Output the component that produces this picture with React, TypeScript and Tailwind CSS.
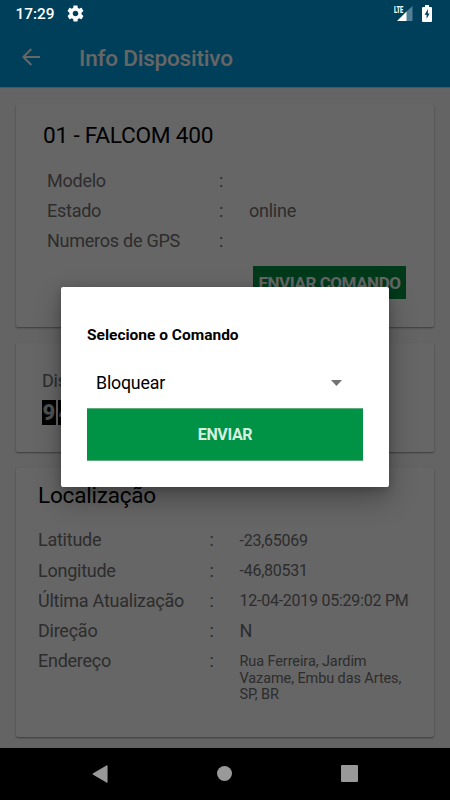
import React from 'react';

const DEVICE_ROWS = [
  { label: 'Modelo', value: '' },
  { label: 'Estado', value: 'online' },
  { label: 'Numeros de GPS', value: '' },
];

const LOCATION_ROWS = [
  { label: 'Latitude', value: '-23,65069', size: 'text-[16px] pt-[2px]' },
  { label: 'Longitude', value: '-46,80531', size: 'text-[16px] pt-[2px]' },
  { label: 'Última Atualização', value: '12-04-2019 05:29:02 PM', size: 'text-[16px] pt-[2px]' },
  { label: 'Direção', value: 'N', size: 'text-[18px]' },
];

const ODOMETER = ['9', '4'];

const CARD = 'bg-white rounded-[2px] shadow-[0_1px_2px_rgba(0,0,0,0.4)]';

const StatusBar: React.FC = () => (
  <div className="absolute inset-x-0 top-0 h-[27px] pl-[15.5px] pr-[18px] flex items-center justify-between text-white">
    <div className="flex items-center gap-[12px]">
      <span className="pt-px text-[15.4px] leading-[27px] font-medium">17:29</span>
      <svg className="w-[17px] h-[17px] -mt-px" viewBox="1.5 1.5 21 21" fill="currentColor">
        <path d="M19.43 12.98c.04-.32.07-.64.07-.98s-.03-.66-.07-.98l2.11-1.65c.19-.15.24-.42.12-.64l-2-3.46c-.12-.22-.39-.3-.61-.22l-2.49 1c-.52-.4-1.08-.73-1.69-.98l-.38-2.65C14.46 2.18 14.25 2 14 2h-4c-.25 0-.46.18-.49.42l-.38 2.65c-.61.25-1.17.59-1.69.98l-2.49-1c-.23-.09-.49 0-.61.22l-2 3.46c-.13.22-.07.49.12.64l2.11 1.65c-.04.32-.07.65-.07.98s.03.66.07.98l-2.11 1.65c-.19.15-.24.42-.12.64l2 3.46c.12.22.39.3.61.22l2.49-1c.52.4 1.08.73 1.69.98l.38 2.65c.03.24.24.42.49.42h4c.25 0 .46-.18.49-.42l.38-2.65c.61-.25 1.17-.59 1.69-.98l2.49 1c.23.09.49 0 .61-.22l2-3.46c.12-.22.07-.49-.12-.64l-2.11-1.65zM12 15.5c-1.93 0-3.5-1.57-3.5-3.5s1.57-3.5 3.5-3.5 3.5 1.57 3.5 3.5-1.57 3.5-3.5 3.5z" />
      </svg>
    </div>
    <div className="flex items-center gap-[9px]">
      <div className="relative w-5 h-[17px]">
        <svg className="w-5 h-[17px]" viewBox="0 0 20 17">
          <path d="M19.5 1v15H13V7z" fill="#4f8095" />
          <path d="M13.5 6.5V16H4z" fill="#fff" />
        </svg>
        <span className="absolute left-px top-0 text-[9.5px] leading-[9px] font-black origin-left scale-x-[0.6]">LTE</span>
      </div>
      <svg className="w-[10px] h-[17px] -mt-px" viewBox="0 0 10 17">
        <path d="M3 0h4v2h2a1 1 0 0 1 1 1v13a1 1 0 0 1-1 1H1a1 1 0 0 1-1-1V3a1 1 0 0 1 1-1h2z" fill="#fff" />
        <path d="M6 4 2.6 9.8h2v4l3-5.3H5.8z" fill="#003f59" />
      </svg>
    </div>
  </div>
);

const NavBar: React.FC = () => (
  <div className="absolute inset-x-0 bottom-0 h-[52px] bg-black text-[#999999]">
    <div className="h-full pl-[92px] pr-[92px] flex items-center justify-between">
      <svg className="w-4 h-[18px]" viewBox="0 0 16 19" fill="currentColor">
        <path d="M14.8.5q1.2-.6 1.2.8v16.4q0 1.4-1.2.8L.8 10.3q-1.2-.8 0-1.6z" />
      </svg>
      <div className="w-[15px] h-[15px] -mt-px rounded-full bg-[#999999]" />
      <div className="w-[17px] h-[17px] -mt-px rounded-[1px] bg-[#999999]" />
    </div>
  </div>
);

const CommandDialog: React.FC = () => (
  <div className="absolute left-[61px] top-[287px] w-[328px] h-[200px] bg-white rounded-[2px] px-[26px] pt-[38px] shadow-[0_12px_28px_rgba(0,0,0,0.3),0_2px_8px_rgba(0,0,0,0.2)]">
    <h2 className="text-[15.5px] leading-5 font-bold text-black">Selecione o Comando</h2>
    <div className="mt-[25px] h-[25px] pl-[9px] pr-[21px] flex items-center justify-between">
      <span className="pt-px text-[17.8px] tracking-[-0.2px] text-black">Bloquear</span>
      <svg className="w-[11px] h-[6px]" viewBox="0 0 11 6" fill="#737373">
        <path d="M0 0h11L5.5 6z" />
      </svg>
    </div>
    <button className="mt-[13px] w-full h-[53px] bg-[#009245] text-[#d6f0e0] text-[16px] tracking-[-0.35px] font-bold pt-px border-y border-[#5eab7c]">ENVIAR</button>
  </div>
);

const App: React.FC = () => {
  return (
    <div className="relative w-[450px] h-[800px] overflow-hidden bg-[#fafafa] font-['Roboto',sans-serif]">
      <header className="h-[87px] pt-[27px] bg-[#009de0] shadow-[0_1px_1px_rgba(0,0,0,0.15)]">
        <div className="h-[61px] pl-[22px] flex items-center text-white">
          <svg className="w-[18px] h-[18px] -mt-[2px]" viewBox="0 0 18 18" fill="none" stroke="currentColor" strokeWidth="2">
            <path d="M18 9H2M9.3 1 1.3 9l8 8" />
          </svg>
          <h1 className="ml-[39px] text-[22.5px] tracking-[-0.2px] leading-7 font-medium">Info Dispositivo</h1>
        </div>
      </header>

      <main className="px-4 pt-[17px] flex flex-col gap-4 text-[#707070]">
        <section className={`${CARD} h-[222.5px] pl-[27px] pr-7 pt-[18px]`}>
          <h2 className="text-[22.7px] tracking-[-0.25px] leading-7 text-black">01 - FALCOM 400</h2>
          <div className="mt-[15px] pl-1">
            {DEVICE_ROWS.map((row) => (
              <div key={row.label} className="h-[30.4px] flex items-center text-[18px] tracking-[-0.25px]">
                <span className="w-[172px]">{row.label}</span>
                <span className="w-[30px]">:</span>
                <span>{row.value}</span>
              </div>
            ))}
          </div>
          <div className="mt-[10px] flex justify-end">
            <div className="w-[153px] h-[33px] pt-[2px] bg-[#009245] text-white text-[17px] tracking-[-0.45px] font-bold flex items-center justify-center whitespace-nowrap">
              ENVIAR COMANDO
            </div>
          </div>
        </section>

        <section className={`${CARD} h-[109px] pl-[26px] pt-[26px]`}>
          <div className="text-[18px] tracking-[-0.25px] leading-6">Dis</div>
          <div className="mt-[7px] flex gap-[2px]">
            {ODOMETER.map((digit) => (
              <span key={digit} className="w-[14px] h-[25px] bg-black text-[#c8c8c8] text-[22px] leading-[25px] font-black text-center">{digit}</span>
            ))}
          </div>
        </section>

        <section className={`${CARD} h-[269px] pl-[22px] pt-[13px]`}>
          <h2 className="text-[22.5px] tracking-[-0.2px] leading-7 text-black">Localização</h2>
          <div className="mt-[16px]">
            {LOCATION_ROWS.map((row) => (
              <div key={row.label} className="h-[30.4px] flex items-center text-[18px] tracking-[-0.25px]">
                <span className="w-[171.5px]">{row.label}</span>
                <span className="w-[30px]">:</span>
                <span className={row.size}>{row.value}</span>
              </div>
            ))}
            <div className="flex text-[18px] tracking-[-0.25px] leading-[30px]">
              <span className="w-[171.5px]">Endereço</span>
              <span className="w-[30px]">:</span>
              <span className="mt-[8px] w-[170px] text-[14.5px] tracking-[-0.1px] leading-[16.6px]">Rua Ferreira, Jardim Vazame, Embu das Artes, SP, BR</span>
            </div>
          </div>
        </section>
      </main>

      <div className="absolute inset-0 bg-black/60" />
      <StatusBar />
      <NavBar />
      <CommandDialog />
    </div>
  );
};

export default App;
